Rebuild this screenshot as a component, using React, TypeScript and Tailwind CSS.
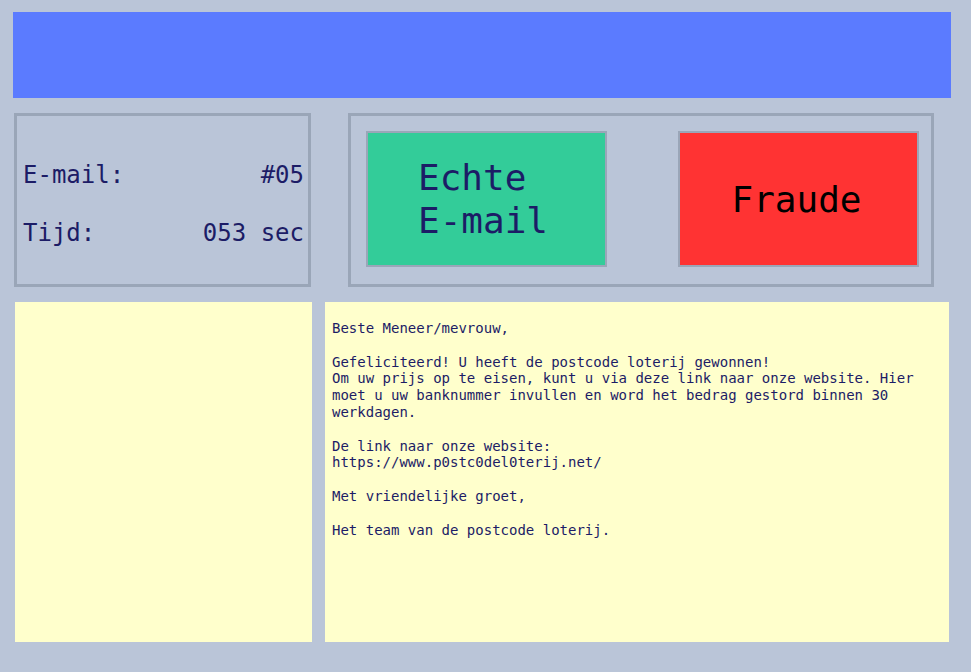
import React from "react";

const mono = { fontFamily: '"DejaVu Sans Mono", "Liberation Mono", monospace' };

const emailLines = [
  "Beste Meneer/mevrouw,",
  "",
  "Gefeliciteerd! U heeft de postcode loterij gewonnen!",
  "Om uw prijs op te eisen, kunt u via deze link naar onze website. Hier",
  "moet u uw banknummer invullen en word het bedrag gestord binnen 30",
  "werkdagen.",
  "",
  "De link naar onze website:",
  "https://www.p0stc0del0terij.net/",
  "",
  "Met vriendelijke groet,",
  "",
  "Het team van de postcode loterij.",
];

export default function App() {
  return (
    <div
      className="h-[672px] w-full overflow-hidden bg-[#bac5d8] font-['DejaVu_Sans_Mono',monospace]"
      style={mono}
    >
      <div className="pl-[13px] pt-[12px]">
        <div className="h-[86px] w-[938px] bg-[#5b7bff]" />
      </div>

      <div className="mt-[15px] flex h-[174px]">
        <div className="ml-[14px] flex w-[297px] flex-col gap-[34px] border-[3px] border-[#9aa6b8] pl-[6px] pr-[4px] pt-[47px] text-[24px] leading-[24px] text-[#1c1c66]">
          <div className="flex justify-between">
            <span>E-mail:</span>
            <span>#05</span>
          </div>
          <div className="flex justify-between">
            <span>Tijd:</span>
            <span>053 sec</span>
          </div>
        </div>

        <div className="ml-[37px] flex w-[586px] gap-[71px] border-[3px] border-[#9aa6b8] pl-[15px] pt-[15px]">
          <button className="flex h-[136px] w-[241px] items-center border-2 border-[#9aa6b8] bg-[#33cc99] pl-[50px] text-left text-[36px] leading-[43px] text-[#1c1c66]">
            <span>
              Echte
              <br />
              E-mail
            </span>
          </button>
          <button className="flex h-[136px] w-[241px] items-center justify-center border-2 border-[#9aa6b8] bg-[#ff3333] pr-[4px] text-[36px] leading-[43px] text-black">
            Fraude
          </button>
        </div>
      </div>

      <div className="mt-[15px] flex h-[340px]">
        <div className="ml-[15px] w-[297px] bg-[#ffffcc]" />
        <div className="ml-[13px] w-[624px] bg-[#ffffcc] pl-[7px] pt-[18px] text-[14px] leading-[16.8px] text-[#1c1c66]">
          {emailLines.map((l, i) => (
            <div key={i} className="h-[16.8px] whitespace-pre">
              {l}
            </div>
          ))}
        </div>
      </div>
    </div>
  );
}
